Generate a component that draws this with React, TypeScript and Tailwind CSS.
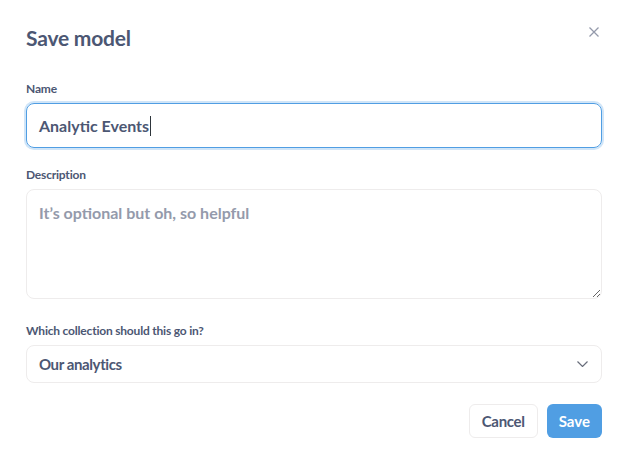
import React from 'react';

const font = { fontFamily: 'Lato, "Noto Sans", sans-serif' };

function Label({ children }: { children: React.ReactNode }) {
  return (
    <div className="text-[12px] leading-[14px] font-bold tracking-[-0.2px] text-[#4c5773] mb-[7px]">{children}</div>
  );
}

export default function App() {
  return (
    <div className="w-[624px] h-[463px] bg-white text-[#4c5773]" style={font}>
      <div className="pl-[26px] pr-[22px] pt-[26px]">
        <div className="flex items-start justify-between">
          <h2 className="text-[21px] leading-[24px] font-bold tracking-[-0.2px]">Save model</h2>
          <button className="mt-[1px] mr-[3px] p-0 text-[#949aab]" aria-label="Close">
            <svg width="10" height="10" viewBox="0 0 10 10" fill="none" stroke="currentColor" strokeWidth="1.3">
              <path d="M0.5 0.5 L9.5 9.5 M9.5 0.5 L0.5 9.5" />
            </svg>
          </button>
        </div>

        <div className="mt-[32px]">
          <Label>Name</Label>
          <div className="h-[45px] rounded-[8px] border border-[#509ee3] ring-2 ring-[#d0e5f8] flex items-center px-[12px] text-[16px] font-bold text-[#4c5773]">
            <span>Analytic Events</span>
            <span className="inline-block w-[1px] h-[20px] bg-[#2e353b] ml-[1px]" />
          </div>
        </div>

        <div className="mt-[20px]">
          <Label>Description</Label>
          <textarea
            className="block w-full h-[110px] rounded-[8px] border border-[#eeecec] px-[12px] pt-[11px] text-[16px] font-bold text-[#4c5773] placeholder:text-[#949aab] outline-none"
            placeholder="It’s optional but oh, so helpful"
          />
        </div>

        <div className="mt-[25px]">
          <Label>Which collection should this go in?</Label>
          <div className="h-[38px] rounded-[8px] border border-[#eeecec] flex items-center justify-between pl-[12px] pr-[13px]">
            <span className="text-[15px] font-bold tracking-[-0.4px]">Our analytics</span>
            <svg width="11" height="6" viewBox="0 0 11 6" fill="none" stroke="#696e7b" strokeWidth="1.2">
              <path d="M0.5 0.5 L5.5 5.5 L10.5 0.5" />
            </svg>
          </div>
        </div>

        <div className="mt-[21px] flex justify-end gap-[9px]">
          <button className="h-[34px] px-[12px] rounded-[6px] border border-[#eeecec] bg-white text-[15px] font-bold tracking-[-0.3px] text-[#4c5773]">
            Cancel
          </button>
          <button className="h-[34px] px-[12px] rounded-[6px] bg-[#509ee3] text-[15px] font-bold text-white">
            Save
          </button>
        </div>
      </div>
    </div>
  );
}
